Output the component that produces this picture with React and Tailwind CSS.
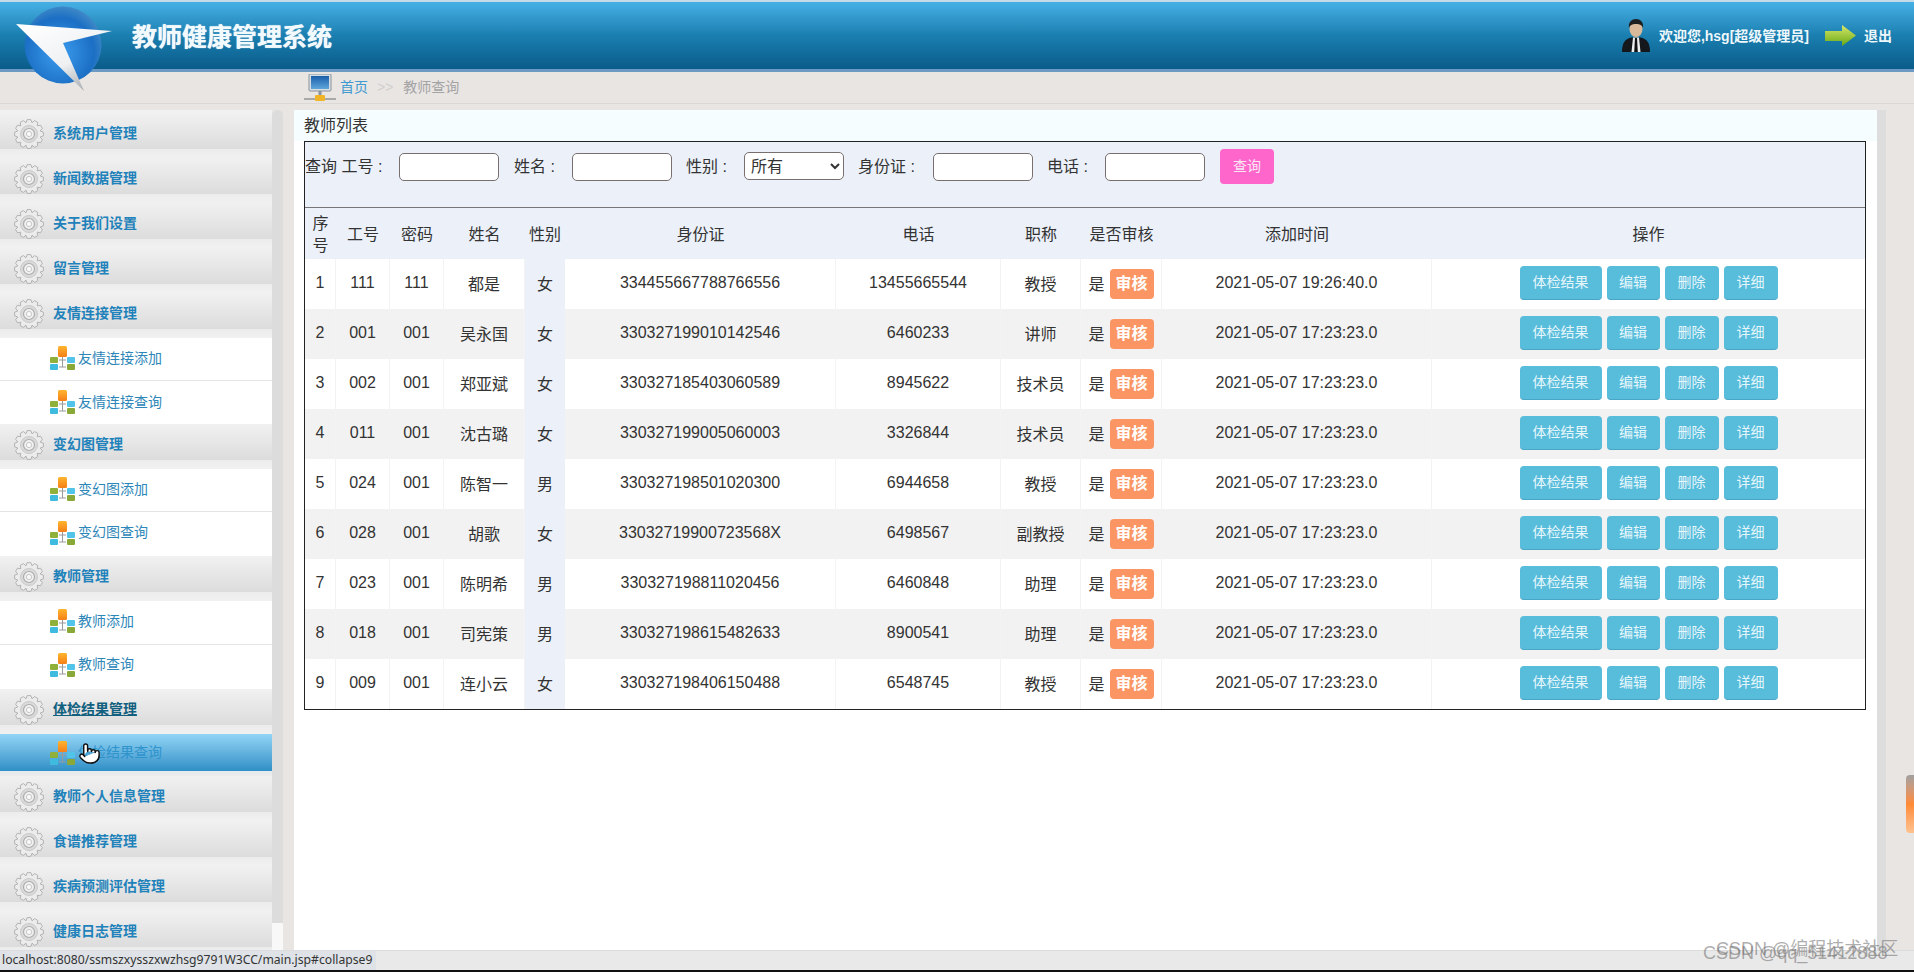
import React from 'react';
import { Pointer } from 'lucide-react';

const teachers = [
  ['1', '111', '111', '都是', '女', '334455667788766556', '13455665544', '教授', '2021-05-07 19:26:40.0'],
  ['2', '001', '001', '吴永国', '女', '330327199010142546', '6460233', '讲师', '2021-05-07 17:23:23.0'],
  ['3', '002', '001', '郑亚斌', '女', '330327185403060589', '8945622', '技术员', '2021-05-07 17:23:23.0'],
  ['4', '011', '001', '沈古璐', '女', '330327199005060003', '3326844', '技术员', '2021-05-07 17:23:23.0'],
  ['5', '024', '001', '陈智一', '男', '330327198501020300', '6944658', '教授', '2021-05-07 17:23:23.0'],
  ['6', '028', '001', '胡歌', '女', '33032719900723568X', '6498567', '副教授', '2021-05-07 17:23:23.0'],
  ['7', '023', '001', '陈明希', '男', '330327198811020456', '6460848', '助理', '2021-05-07 17:23:23.0'],
  ['8', '018', '001', '司宪策', '男', '330327198615482633', '8900541', '助理', '2021-05-07 17:23:23.0'],
  ['9', '009', '001', '连小云', '女', '330327198406150488', '6548745', '教授', '2021-05-07 17:23:23.0'],
];

const heads = ['序号', '工号', '密码', '姓名', '性别', '身份证', '电话', '职称', '是否审核', '添加时间', '操作'];

// sidebar, in top-down order. second value of a sub is its row height class
const menu = [
  { title: '系统用户管理' },
  { title: '新闻数据管理' },
  { title: '关于我们设置' },
  { title: '留言管理' },
  { title: '友情连接管理', subs: [['友情连接添加', 'h-[43px] pb-[2px]'], ['友情连接查询', 'h-[43px] pb-[1px]']] },
  { title: '变幻图管理', subs: [['变幻图添加', 'h-[43px] pb-[2px]'], ['变幻图查询', 'h-[44px] pb-[3px]']] },
  { title: '教师管理', subs: [['教师添加', 'h-[44px] pb-[3px]'], ['教师查询', 'h-[44px] pb-[5px]']] },
  { title: '体检结果管理', hover: true, active: '体检结果查询' },
  { title: '教师个人信息管理' },
  { title: '食谱推荐管理' },
  { title: '疾病预测评估管理' },
  { title: '健康日志管理' },
];

const gearPath = (() => {
  const pts = [];
  const teeth = 12;
  for (let i = 0; i < teeth; i++) {
    const a = (i / teeth) * Math.PI * 2;
    const step = (Math.PI * 2) / teeth;
    [[11.6, -0.5], [14.5, -0.24], [14.5, 0.24], [11.6, 0.5]].forEach(([r, k]) => {
      const t = a + k * step;
      pts.push(`${(15 + r * Math.cos(t)).toFixed(2)} ${(15 + r * Math.sin(t)).toFixed(2)}`);
    });
  }
  return 'M' + pts.join('L') + 'Z';
})();

function Gear() {
  return (
    <svg width="30" height="30" viewBox="0 0 30 30" className="shrink-0">
      <path d={gearPath} fill="#ececec" stroke="#adadad" strokeWidth="0.9" />
      <circle cx="15" cy="15" r="8.5" fill="#dadada" stroke="#cacaca" strokeWidth="1" />
      <circle cx="15" cy="15" r="5.5" fill="#f0f0f0" stroke="#acacac" strokeWidth="1.2" />
      <circle cx="15" cy="15" r="2.6" fill="#f9f9f9" stroke="#bbbbbb" strokeWidth="0.8" />
    </svg>
  );
}

function TreeIcon() {
  return (
    <svg width="25" height="24" viewBox="0 0 25 24" className="shrink-0">
      <defs>
        <linearGradient id="treeOrange" x1="0" y1="0" x2="0" y2="1">
          <stop offset="0" stopColor="#ffb52e" />
          <stop offset="1" stopColor="#f57f17" />
        </linearGradient>
      </defs>
      <path d="M12.5 10v11M9 14h7M9 21h7" stroke="#9a9a9a" strokeWidth="1" fill="none" />
      <rect x="8" y="0" width="9" height="11" rx="1.5" fill="url(#treeOrange)" />
      <rect x="0" y="11" width="8" height="6" rx="1" fill="#8fb03a" />
      <rect x="0" y="18" width="8" height="6" rx="1" fill="#3fbbe0" />
      <rect x="17" y="11" width="8" height="6" rx="1" fill="#52c4ea" />
      <rect x="17" y="18" width="8" height="6" rx="1" fill="#8aa838" />
    </svg>
  );
}

function Logo() {
  return (
    <svg width="130" height="100" viewBox="0 0 130 100" className="absolute left-0 top-0">
      <defs>
        <radialGradient id="globe" cx="0.45" cy="0.6" r="0.65">
          <stop offset="0" stopColor="#3d9df0" />
          <stop offset="0.7" stopColor="#1b6fc4" />
          <stop offset="1" stopColor="#4a90c8" />
        </radialGradient>
        <linearGradient id="plane" x1="0.1" y1="0" x2="0.8" y2="1">
          <stop offset="0" stopColor="#ffffff" />
          <stop offset="0.6" stopColor="#eef0f2" />
          <stop offset="1" stopColor="#9da3a8" />
        </linearGradient>
      </defs>
      <circle cx="63" cy="45" r="38.5" fill="url(#globe)" />
      <path d="M16 24 L112 31 L63 43 L84 91 Z" fill="url(#plane)" />
    </svg>
  );
}

function Avatar() {
  return (
    <svg width="28" height="33" viewBox="0 0 28 33" className="shrink-0">
      <path d="M0 33c0-9 3-13 9-14.500h10C25 20 28 24 28 33Z" fill="#14171c" />
      <path d="M11 18.500h6l1.500 14.500h-9Z" fill="#eef0f0" />
      <path d="M13 19h2l.8 14h-3.600Z" fill="#111" />
      <ellipse cx="14" cy="10" rx="6.500" ry="8" fill="#d9b999" />
      <path d="M7 9C6 3 10 0 14 0s8 3 7 9c-1-3-3-4-7-4S8 6 7 9Z" fill="#1d1e20" />
    </svg>
  );
}

function ExitArrow() {
  return (
    <svg width="31" height="22" viewBox="0 0 31 22" className="shrink-0">
      <defs>
        <linearGradient id="arrowGreen" x1="0" y1="0" x2="0" y2="1">
          <stop offset="0" stopColor="#d7e86a" />
          <stop offset="1" stopColor="#68a815" />
        </linearGradient>
      </defs>
      <path d="M0 6h17V0l14 10.500L17 21v-5H0Z" fill="url(#arrowGreen)" />
    </svg>
  );
}

function Computer() {
  return (
    <svg width="32" height="28" viewBox="0 0 32 28" className="shrink-0">
      <defs>
        <linearGradient id="screen" x1="0" y1="0" x2="0" y2="1">
          <stop offset="0" stopColor="#1b5fa8" />
          <stop offset="1" stopColor="#5fa6dc" />
        </linearGradient>
      </defs>
      <rect x="5" y="0" width="22" height="17" rx="1" fill="#d8dde2" stroke="#8a939b" />
      <rect x="7" y="2" width="18" height="13" fill="url(#screen)" />
      <path d="M16 17v6" stroke="#8a939b" strokeWidth="3" />
      <path d="M0 25h32" stroke="#a9a9a9" strokeWidth="2" />
      <rect x="11" y="21" width="10" height="6" rx="1" fill="#f0b429" />
    </svg>
  );
}

function MenuHeader({ title, hover }) {
  return (
    <div>
      <div className="h-[36px] pl-[14px] pt-[5px] flex items-center gap-[9px] bg-gradient-to-b from-[#f1f1f1] to-[#dcdcdc]">
        <Gear />
        <span className={hover ? 'text-[14px] font-bold text-[#12607f] underline' : 'text-[14px] font-bold text-[#1f82ba]'}>{title}</span>
      </div>
      <div className="h-[9px] bg-gradient-to-b from-[#ececec] to-[#f1f1f1]" />
    </div>
  );
}

function SubRow({ label, h, last }) {
  return (
    <div className={`${h} bg-white pl-[50px] flex items-center gap-[3px] text-[14px] text-[#2d86b8] ${last ? '' : 'border-b border-[#e4e4e4]'}`}>
      <TreeIcon />
      <span>{label}</span>
    </div>
  );
}

function ActiveRow({ label }) {
  return (
    <div className="h-[42px] bg-gradient-to-b from-[#a5dcf7] to-[#ececec]">
      <div className="relative h-[37px] pl-[50px] flex items-center gap-[3px] text-[14px] text-[#2f93cc] bg-gradient-to-b from-[#92d5f6] to-[#2e8fc6]">
        <TreeIcon />
        <span>{label}</span>
        <Pointer size={23} fill="#ffffff" stroke="#111111" strokeWidth={1.5} className="absolute left-[78px] top-[8px]" />
      </div>
    </div>
  );
}

function Sidebar() {
  return (
    <div className="w-[272px] h-full overflow-hidden bg-[#f1f1f1] pt-[3px]">
      {menu.map((m) => (
        <div key={m.title}>
          <MenuHeader title={m.title} hover={m.hover} />
          {m.subs && m.subs.map(([label, h], i) => (
            <SubRow key={label} label={label} h={h} last={i === m.subs.length - 1} />
          ))}
          {m.active && <ActiveRow label={m.active} />}
        </div>
      ))}
    </div>
  );
}

function Field({ label, labelW, ml, children }) {
  return (
    <div className={`flex ${ml}`}>
      <span className={`${labelW} h-[28px] flex items-center whitespace-pre`}>{label}</span>
      {children}
    </div>
  );
}

const inputCls = 'w-[100px] h-[28px] bg-white border border-[#7a6f6f] rounded-[5px]';

function QueryBar() {
  return (
    <div className="h-[65px] pt-[11px] flex items-start text-[16px] text-[#333]">
      <Field label="查询 工号 :" labelW="w-[94px]" ml="ml-0">
        <input className={inputCls} />
      </Field>
      <Field label="姓名 :" labelW="w-[58px]" ml="ml-[15px]">
        <input className={inputCls} />
      </Field>
      <Field label="性别 :" labelW="w-[58px]" ml="ml-[14px]">
        <select className="w-[100px] h-[28px] -mt-px bg-white border border-[#7a6f6f] rounded-[5px] pl-[2px] text-[16px]">
          <option>所有</option>
        </select>
      </Field>
      <Field label="身份证 :" labelW="w-[75px]" ml="ml-[14px]">
        <input className={inputCls} />
      </Field>
      <Field label="电话 :" labelW="w-[58px]" ml="ml-[14px]">
        <input className={inputCls} />
      </Field>
      <button className="ml-[15px] -mt-[4px] w-[54px] h-[35px] rounded-[4px] bg-[#ff66cc] text-[14px] text-[#fbe6f4]">查询</button>
    </div>
  );
}

function ActionBtn({ w, children }) {
  return (
    <button className={`${w} h-[34px] rounded-[4px] bg-[#58bcdb] border-b border-[#4aa6c4] text-[14px] text-[#e6f7fb]`}>{children}</button>
  );
}

// body cell classes per column: digits sit a little higher than the Chinese text
const cellCls = [
  'text-center border-r border-[#f3f3f3] pb-[2px]',
  'text-center border-r border-[#f3f3f3] pb-[2px]',
  'text-center border-r border-[#f3f3f3] pb-[2px]',
  'text-center border-r border-[#f3f3f3] pt-[2px]',
  'text-center bg-[#ebf0f9] pt-[2px]',
  'text-center border-r border-[#f3f3f3] pb-[2px]',
  'text-center border-r border-[#f3f3f3] pb-[2px]',
  'text-center border-r border-[#f3f3f3] pt-[2px]',
];

function TeacherTable() {
  return (
    <table className="w-full table-fixed border-separate border-spacing-0 border border-[#222] bg-[#ebf0f9] text-[16px] text-[#333]">
      <colgroup>
        <col className="w-[31px]" />
        <col className="w-[54px]" />
        <col className="w-[54px]" />
        <col className="w-[81px]" />
        <col className="w-[40px]" />
        <col className="w-[271px]" />
        <col className="w-[165px]" />
        <col className="w-[80px]" />
        <col className="w-[81px]" />
        <col className="w-[270px]" />
        <col />
      </colgroup>
      <thead>
        <tr>
          <td colSpan={11} className="p-0 align-top border-b border-[#777]"><QueryBar /></td>
        </tr>
        <tr className="h-[51px]">
          {heads.map((h) => (
            <th key={h} className="font-normal text-center leading-[22px] px-[3px] pt-[3px]">{h}</th>
          ))}
        </tr>
      </thead>
      <tbody>
        {teachers.map((t, i) => (
          <tr key={t[0]} className={i % 2 === 0 ? 'h-[50px] bg-white' : 'h-[50px] bg-[#f2f2f2]'}>
            {t.slice(0, 8).map((v, j) => (
              <td key={j} className={cellCls[j]}>{v}</td>
            ))}
            <td className="border-r border-[#f3f3f3]">
              <div className="flex items-center justify-center gap-[5px]">
                <span className="pt-[1px]">是</span>
                <span className="w-[44px] h-[30px] rounded-[4px] bg-[#fb9664] text-white font-bold flex items-center justify-center">审核</span>
              </div>
            </td>
            <td className="text-center border-r border-[#f3f3f3] pb-[2px]">{t[8]}</td>
            <td className="pb-[2px]">
              <div className="flex items-center justify-center gap-[5px]">
                <ActionBtn w="w-[82px]">体检结果</ActionBtn>
                <ActionBtn w="w-[53px]">编辑</ActionBtn>
                <ActionBtn w="w-[54px]">删除</ActionBtn>
                <ActionBtn w="w-[54px]">详细</ActionBtn>
              </div>
            </td>
          </tr>
        ))}
      </tbody>
    </table>
  );
}

export default function App() {
  return (
    <div className="relative w-[1914px] h-[972px] overflow-hidden bg-[#e9e5e3] font-['Liberation_Sans','Noto_Sans_CJK_SC',sans-serif]">
      {/* top banner */}
      <header className="h-[72px] border-t-[2px] border-t-[#c5dbe9] border-b-[3px] border-b-[#6c9ac4] bg-gradient-to-b from-[#46b0e6] via-[#1a7fb0] to-[#0a5c8a] flex items-center">
        <h1 className="ml-[132px] mt-[4px] text-[25px] font-bold text-[#f2fafd] [text-shadow:0_0_1px_#ffffff]">教师健康管理系统</h1>
        <div className="ml-auto flex items-center text-[14px] font-bold text-[#eef7fb]">
          <Avatar />
          <span className="ml-[9px] mt-[2px]">欢迎您,hsg[超级管理员]</span>
          <span className="ml-[16px]"><ExitArrow /></span>
          <span className="ml-[8px] mr-[22px] mt-[2px]">退出</span>
        </div>
      </header>

      {/* breadcrumb */}
      <div className="h-[38px] pb-[6px]">
        <div className="h-[32px] border-b border-[#dcd8d6] pl-[304px] flex items-center text-[14px]">
          <Computer />
          <span className="ml-[4px] text-[#3e9ad0]">首页</span>
          <span className="ml-[9px] text-[#d0d0d0]">&gt;&gt;</span>
          <span className="ml-[10px] text-[#a3a3a3]">教师查询</span>
        </div>
      </div>

      <div className="h-[840px] flex">
        <Sidebar />
        <div className="w-[11px] h-full flex flex-col">
          <div className="flex-1 bg-[#dcdcdc] rounded-t-[5px]" />
          <div className="h-[27px] bg-[#f8f8f8]" />
        </div>
        <div className="w-[11px]" />
        <main className="w-[1583px] h-full bg-white">
          <div className="h-[31px] pl-[10px] bg-[#f5fdff] flex items-center text-[16px] text-[#333]">教师列表</div>
          <div className="pl-[10px] pr-[11px]">
            <TeacherTable />
          </div>
        </main>
        <div className="w-[9px] h-full bg-[#dddddd]" />
      </div>

      {/* status strip */}
      <div className="h-[20px] bg-[#e9e9e9] border-t border-[#dcdcdc] flex">
        <div className="w-[376px] h-full bg-[#dfe3e8] pl-[2px] flex items-center text-[12.2px] text-[#333] font-['Noto_Sans',sans-serif] whitespace-nowrap">
          localhost:8080/ssmszxysszxwzhsg9791W3CC/main.jsp#collapse9
        </div>
      </div>
      <div className="h-[2px] bg-[#111]" />

      <Logo />
      <div className="absolute right-0 top-[775px] w-[8px] h-[58px] rounded-l-[4px] bg-gradient-to-b from-[#a0a0a0] via-[#ff8a33] to-[#ffc28f]" />
      <div className="absolute left-[1703px] top-[940px] whitespace-nowrap text-[18px] text-[#77777799]">CSDN @qq_51412888</div>
      <div className="absolute left-[1716px] top-[936px] whitespace-nowrap text-[18px] text-[#77777799]">CSDN @编程技术社区</div>
    </div>
  );
}
